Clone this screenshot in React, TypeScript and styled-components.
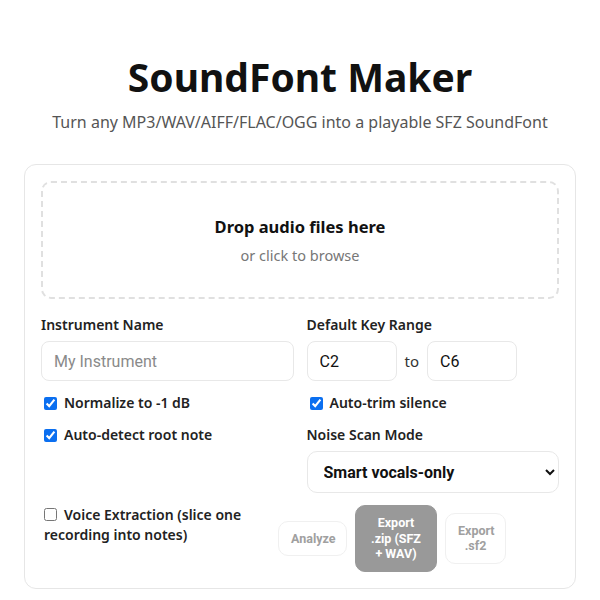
import styled, { createGlobalStyle } from "styled-components";

const GlobalStyle = createGlobalStyle`
  html, body {
    margin: 0;
    padding: 0;
    background: #ffffff;
    font-family: "Noto Sans", "Open Sans", sans-serif;
    color: #111;
  }
`;

const App = () => {
  return (
    <>
      <GlobalStyle />
      <Page>
        <Title>SoundFont Maker</Title>
        <Subtitle>
          Turn any MP3/WAV/AIFF/FLAC/OGG into a playable SFZ SoundFont
        </Subtitle>
        <Card>
          <DropZone>
            <DropTitle>Drop audio files here</DropTitle>
            <DropHint>or click to browse</DropHint>
          </DropZone>

          <Grid>
            <Field>
              <Label>Instrument Name</Label>
              <TextInput placeholder="My Instrument" />
            </Field>
            <Field>
              <Label>Default Key Range</Label>
              <RangeRow>
                <KeyInput defaultValue="C2" />
                <RangeTo>to</RangeTo>
                <KeyInput defaultValue="C6" />
              </RangeRow>
            </Field>

            <Stack>
              <CheckRow>
                <Check type="checkbox" defaultChecked />
                Normalize to -1 dB
              </CheckRow>
              <CheckRow>
                <Check type="checkbox" defaultChecked />
                Auto-detect root note
              </CheckRow>
            </Stack>
            <Stack>
              <CheckRow>
                <Check type="checkbox" defaultChecked />
                Auto-trim silence
              </CheckRow>
              <Field>
                <Label>Noise Scan Mode</Label>
                <Select defaultValue="smart">
                  <option value="smart">Smart vocals-only</option>
                  <option value="full">Full scan</option>
                  <option value="off">Off</option>
                </Select>
              </Field>
            </Stack>
          </Grid>

          <BottomRow>
            <VoiceLabel>
              <Check type="checkbox" />
              Voice Extraction (slice one recording into notes)
            </VoiceLabel>
            <Actions>
              <ActionButton disabled $w={69}>
                Analyze
              </ActionButton>
              <ActionButton $primary $w={82}>
                Export .zip (SFZ + WAV)
              </ActionButton>
              <ActionButton disabled $w={61}>
                Export .sf2
              </ActionButton>
            </Actions>
          </BottomRow>
        </Card>
      </Page>
    </>
  );
};

export default App;

const Page = styled.div`
  max-width: 552px;
  margin: 0 auto;
  padding-top: 52px;
`;

const Title = styled.h1`
  margin: 0;
  text-align: center;
  font-size: 39px;
  line-height: 50px;
  font-weight: 700;
  color: #111;
`;

const Subtitle = styled.p`
  margin: 8px 0 0;
  text-align: center;
  font-size: 16px;
  line-height: 24px;
  color: #555;
`;

const Card = styled.div`
  margin-top: 30px;
  border: 1px solid #e6e6e6;
  border-radius: 12px;
  padding: 16px 16px 16px;
`;

const DropZone = styled.div`
  height: 114px;
  border: 2px dashed #e0e0e0;
  border-radius: 10px;
  display: flex;
  flex-direction: column;
  align-items: center;
  justify-content: center;
`;

const DropTitle = styled.div`
  font-size: 16.5px;
  font-weight: 700;
  line-height: 22px;
  color: #111;
`;

const DropHint = styled.div`
  margin-top: 7px;
  font-size: 14.5px;
  line-height: 20px;
  color: #777;
`;

const Grid = styled.div`
  margin-top: 16px;
  display: grid;
  grid-template-columns: 1fr 1fr;
  column-gap: 13px;
  row-gap: 12px;
`;

const Field = styled.div`
  display: flex;
  flex-direction: column;
  gap: 6px;
`;

const Label = styled.label`
  font-size: 14px;
  font-weight: 600;
  line-height: 20px;
  color: #222;
`;

const TextInput = styled.input`
  box-sizing: border-box;
  height: 40px;
  padding: 0 12px;
  border: 1px solid #e8e8e8;
  border-radius: 8px;
  font-family: Roboto, sans-serif;
  font-size: 16px;
  color: #111;
  outline: none;
  &::placeholder {
    color: #8a8a8a;
  }
`;

const RangeRow = styled.div`
  display: flex;
  align-items: center;
  gap: 8px;
`;

const KeyInput = styled(TextInput)`
  width: 90px;
`;

const RangeTo = styled.span`
  font-size: 15px;
  color: #333;
`;

const Stack = styled.div`
  display: flex;
  flex-direction: column;
  gap: 12px;
`;

const CheckRow = styled.label`
  display: flex;
  align-items: center;
  gap: 7px;
  padding-left: 3px;
  font-size: 14px;
  font-weight: 600;
  line-height: 20px;
  color: #222;
`;

const Check = styled.input`
  margin: 0;
  width: 13px;
  height: 13px;
  accent-color: #0b6ff0;
  flex-shrink: 0;
`;

const Select = styled.select`
  box-sizing: border-box;
  height: 42px;
  padding: 0 10px 0 12px;
  border: 1px solid #e8e8e8;
  border-radius: 10px;
  background: #fff;
  font-family: Roboto, sans-serif;
  font-size: 16px;
  font-weight: 700;
  color: #111;
`;

const BottomRow = styled.div`
  margin-top: 12px;
  display: flex;
  align-items: center;
  justify-content: space-between;
  padding-right: 53px;
`;

const VoiceLabel = styled.label`
  width: 220px;
  padding-left: 3px;
  font-size: 14px;
  font-weight: 600;
  line-height: 20px;
  color: #222;
  align-self: flex-start;

  ${Check} {
    margin-right: 7px;
    vertical-align: -1px;
  }
`;

const Actions = styled.div`
  display: flex;
  align-items: center;
  gap: 8px;
`;

const ActionButton = styled.button<{ $primary?: boolean; $w: number }>`
  box-sizing: border-box;
  width: ${(p) => p.$w}px;
  padding: 9px 12px;
  border-radius: 10px;
  border: 1px solid ${(p) => (p.$primary ? "#999" : "#f0f0f0")};
  background: ${(p) => (p.$primary ? "#999999" : "#ffffff")};
  color: ${(p) => (p.$primary ? "#ffffff" : "#a0a0a0")};
  font-family: Roboto, sans-serif;
  font-size: 12.5px;
  font-weight: 700;
  line-height: 15.5px;
  text-align: center;
  cursor: ${(p) => (p.$primary ? "pointer" : "default")};
`;
